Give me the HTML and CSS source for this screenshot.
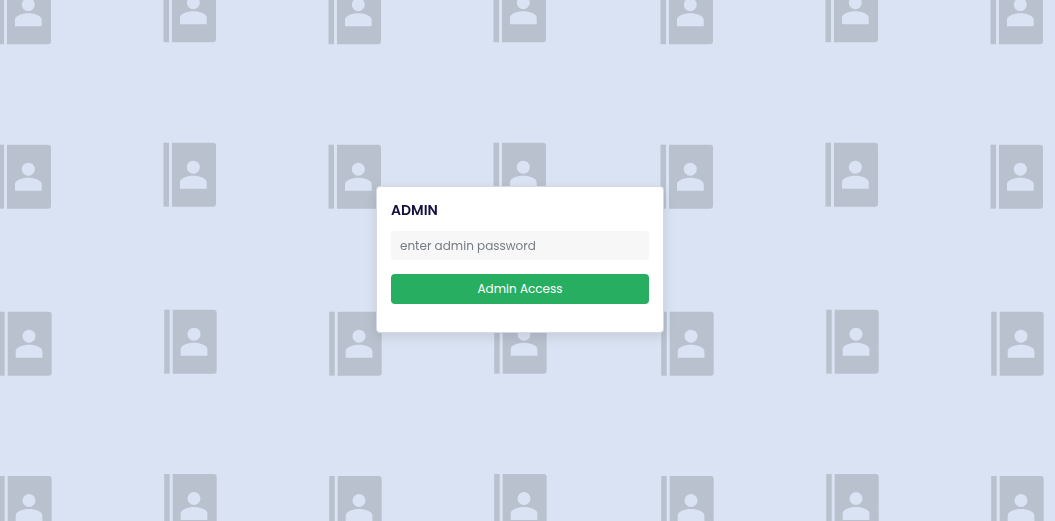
FILE: index.html
```html
<!DOCTYPE html>
<html lang="en">
<head>
<meta charset="utf-8">
<meta name="viewport" content="width=device-width, initial-scale=1">
<title>Admin</title>
<link rel="stylesheet" href="styles.css">
</head>
<body>
<svg class="backdrop" aria-hidden="true">
  <defs>
    <g id="book">
      <path d="M0 0h5.5v64H0z"/>
      <path fill-rule="evenodd" d="M8.5 0H49.500q3 0 3 3V61q0 3-3 3H8.500zM29.800 18a6.500 6.500 0 1 0 0 13a6.500 6.500 0 1 0 0-13zM16.500 46H43.200V39.500C43.200 35.500 36 33 29.800 33S16.500 35.500 16.500 39.500z"/>
    </g>
    <g id="row">
      <use href="#book" x="8" y="2"/>
      <use href="#book" x="173" y="0"/>
      <use href="#book" x="338" y="2"/>
      <use href="#book" x="503" y="0"/>
    </g>
    <pattern id="books" patternUnits="userSpaceOnUse" x="-10" y="-40" width="662" height="664">
      <use href="#row" x="0.500" y="18.200"/>
      <use href="#row" x="0.500" y="182.700"/>
      <use href="#row" x="1.200" y="349.700"/>
      <use href="#row" x="1.200" y="514"/>
    </pattern>
  </defs>
  <rect width="100%" height="100%" fill="url(#books)"/>
</svg>
<main class="page">
  <form class="card">
    <h1 class="title">ADMIN</h1>
    <input class="field" type="password" placeholder="enter admin password" aria-label="Admin password">
    <button class="submit" type="submit">Admin Access</button>
  </form>
</main>
</body>
</html>
```
FILE: styles.css
```css
* {
  box-sizing: border-box;
}

body {
  margin: 0;
  background: #dae3f3;
  font-family: Poppins, Inter, sans-serif;
}

.backdrop {
  position: fixed;
  inset: 0;
  width: 100%;
  height: 100%;
  fill: #b9c1cf;
}

.page {
  position: relative;
  display: flex;
  align-items: center;
  justify-content: center;
  min-height: 100vh;
  padding: 0 15px 2px 0;
}

.card {
  display: flex;
  flex-direction: column;
  width: 288px;
  margin: 16px;
  padding: 14px 14px 28px;
  border: 1px solid #d5d9e2;
  border-radius: 4px;
  background: #fff;
  box-shadow: 0 4px 12px rgba(0, 0, 0, 0.1);
}

.title {
  margin: 0 0 12px;
  color: #130f40;
  font-size: 14px;
  font-weight: 600;
  line-height: 18px;
}

.field {
  width: 100%;
  height: 29px;
  margin-bottom: 14px;
  padding: 0 9px;
  border: 0;
  border-radius: 4px;
  background: #f7f7f7;
  color: #130f40;
  font: inherit;
  font-size: 12px;
}

.field::placeholder {
  color: #757c84;
  opacity: 1;
}

.submit {
  height: 30px;
  border: 0;
  border-radius: 4px;
  background: #27ae60;
  color: #fff;
  font: inherit;
  font-size: 12px;
  cursor: pointer;
}
```
